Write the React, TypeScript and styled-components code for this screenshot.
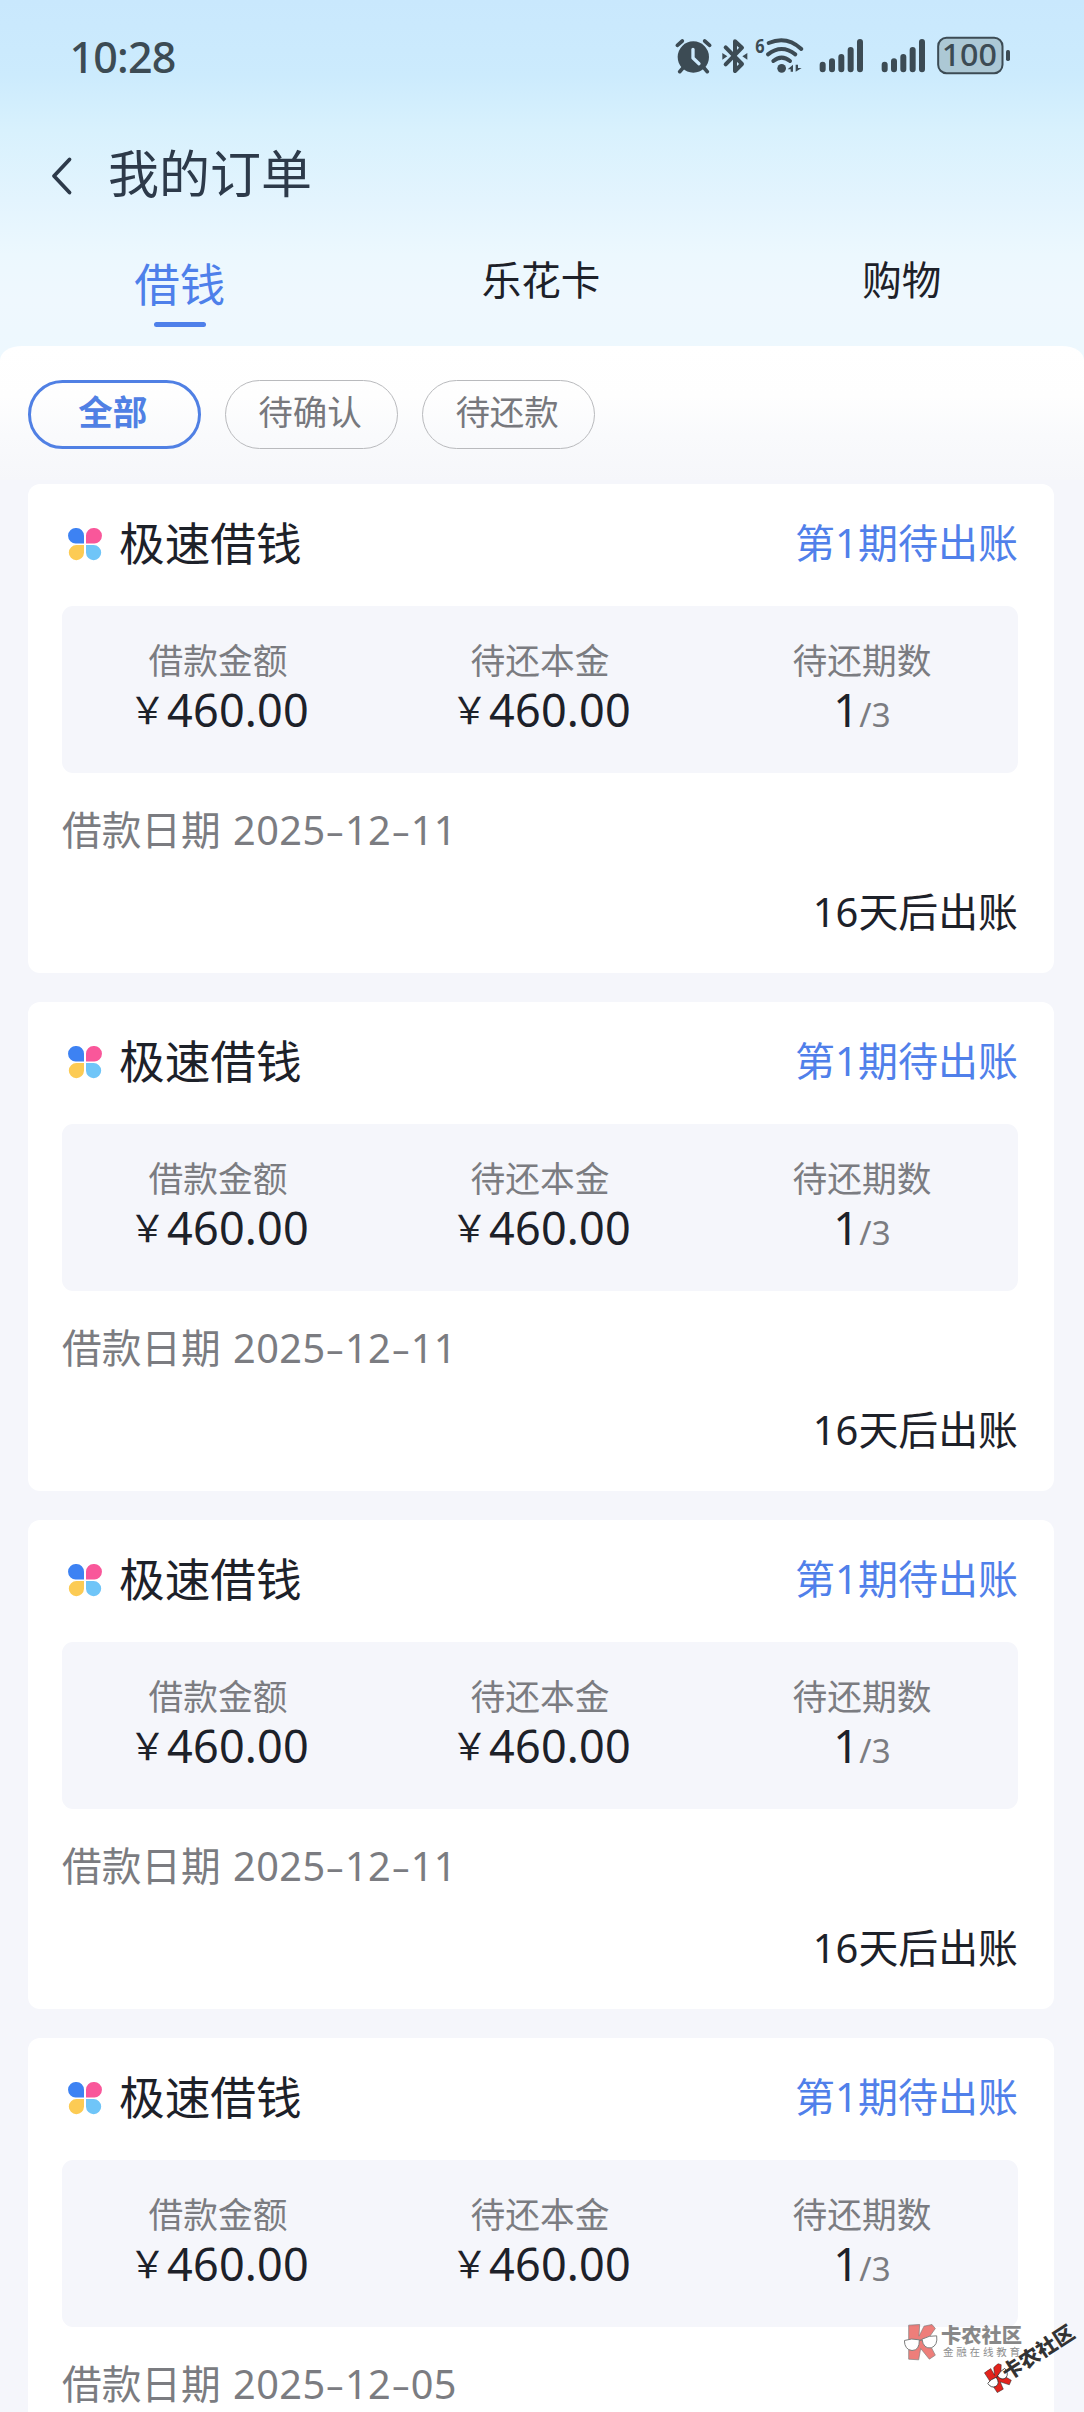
import React from 'react';
import styled, { createGlobalStyle } from 'styled-components';

const Global = createGlobalStyle`
  * { box-sizing: border-box; }
  html, body { margin: 0; padding: 0; background: #f5f6fb; }
  body { font-family: "Noto Sans", "Noto Sans CJK SC", sans-serif; color: #1d2129; }
`;

const Screen = styled.div`
  position: relative;
  width: 1084px;
  height: 2412px;
  overflow: hidden;
  background: #f5f6fb;
`;

const Hero = styled.header`
  height: 365px;
  margin-bottom: -19.5px;
  background: linear-gradient(180deg, #c9e8fd 0, #ccebfd 75px, #d8f1fd 130px, #e3f4fe 200px, #ecf8fe 255px, #eff8fe 300px, #edf8fe 365px);
`;

const StatusBar = styled.div`
  display: flex;
  align-items: center;
  justify-content: space-between;
  height: 114px;
  padding: 0 73.3px 0 69.5px;
  color: #3c4b54;
`;

const Clock = styled.time`
  font-size: 43px;
  font-weight: 500;
  line-height: 60px;
  letter-spacing: -0.8px;
`;

const StatusIcons = styled.div`
  display: flex;
  height: 40px;
  margin-bottom: 4px;
`;

const StatusIcon = styled.svg<{ $w: number; $gap?: number }>`
  width: ${(p) => p.$w / 3}px;
  height: 40px;
  margin-left: ${(p) => (p.$gap ?? 0) / 3}px;
  display: block;
  overflow: visible;
`;

const NavBar = styled.nav`
  display: flex;
  align-items: center;
  height: 118px;
  padding-left: 50px;
  color: #2d3a4a;
`;

const BackIcon = styled.svg`
  width: 24px;
  height: 40px;
  margin: 5px 34px 0 0;
`;

const PageTitle = styled.h1`
  margin: 0;
  font-size: 51px;
  font-weight: 400;
  line-height: 70px;
`;

const Tabs = styled.div`
  display: grid;
  grid-template-columns: repeat(3, 1fr);
  padding: 1px 2px 0 0;
`;

const Tab = styled.div<{ $active?: boolean }>`
  display: flex;
  flex-direction: column;
  align-items: center;
  padding-top: ${(p) => (p.$active ? 18.5 : 19)}px;
  padding-right: ${(p) => (p.$active ? 1 : 0)}px;
  font-size: ${(p) => (p.$active ? 45.5 : 39.5)}px;
  line-height: ${(p) => (p.$active ? 64 : 56)}px;
  color: ${(p) => (p.$active ? '#4e80ea' : '#1d2129')};
`;

const TabMark = styled.span`
  width: 52px;
  height: 5.4px;
  margin-top: 6.2px;
  border-radius: 3px;
  background: #4e80ea;
`;

const Filters = styled.section`
  position: relative;
  display: flex;
  gap: 24.7px;
  height: 134.5px;
  padding: 34.5px 28px 0;
  border-radius: 22px 22px 0 0 / 14px 14px 0 0;
  background: linear-gradient(180deg, #ffffff 0, #fefefe 50px, #f9fafc 90px, #f6f7fa 134px);
`;

const Pill = styled.button<{ $active?: boolean }>`
  width: 172.5px;
  height: 69px;
  padding: 0 3px 5px 0;
  border: ${(p) => (p.$active ? '3px solid #5080e4' : '1px solid #b9babd')};
  border-radius: 35px;
  background: transparent;
  color: ${(p) => (p.$active ? '#5080e4' : '#77787d')};
  font-family: inherit;
  font-size: 34.5px;
  font-weight: ${(p) => (p.$active ? 700 : 400)};
  line-height: 50px;
`;

const List = styled.main`
  display: flex;
  flex-direction: column;
  gap: 29px;
  padding: 3.5px 30px 0 28px;
`;

const Card = styled.article`
  height: 489px;
  padding: 0 36px 0 34px;
  border-radius: 12px;
  background: #fff;
`;

const CardHead = styled.div`
  display: flex;
  align-items: center;
  height: 122.5px;
  padding: 0 0 2px 6px;
`;

const ProductIcon = styled.svg`
  width: 34px;
  height: 34px;
  margin-right: 17px;
`;

const ProductName = styled.h2`
  flex: 1;
  margin: 0 0 2px;
  font-size: 45.7px;
  font-weight: 400;
  line-height: 64px;
`;

const Status = styled.span`
  margin-bottom: 2px;
  font-size: 40px;
  line-height: 56px;
  color: #5080ea;
`;

const Figures = styled.div`
  display: grid;
  grid-template-columns: repeat(3, 1fr);
  gap: 20px;
  height: 166.5px;
  padding: 30px 5px 0;
  border-radius: 11px;
  background: #f5f6fb;
`;

const Figure = styled.div`
  display: flex;
  flex-direction: column;
  align-items: center;
`;

const Label = styled.span`
  font-size: 34.7px;
  line-height: 50px;
  color: #7b7c81;
`;

const Amount = styled.span<{ $money?: boolean }>`
  padding-left: ${(p) => (p.$money ? 8 : 0)}px;
  font-size: 45px;
  line-height: 47px;
  letter-spacing: 0.2px;
  white-space: nowrap;
`;

const Yen = styled.span`
  display: inline-block;
  width: 32px;
  font-family: "Noto Sans CJK SC", sans-serif;
  font-size: 37px;
  line-height: 40px;
  letter-spacing: 0;
  text-indent: -6px;
  transform: translateY(-3px);
`;

const Total = styled.span`
  font-size: 33px;
  color: #7b7c81;
`;

const DateRow = styled.div`
  height: 115px;
  font-size: 39.7px;
  line-height: 115px;
  color: #7b7c81;
  white-space: pre;
`;

const Num = styled.span`
  margin-left: 2px;
  letter-spacing: 0.4px;
`;

const Dash = styled.span`
  display: inline-block;
  width: 19.5px;
  text-align: center;
  letter-spacing: 0;
  transform: scale(1.5, 0.9);
`;

const DueRow = styled.div`
  height: 48px;
  font-size: 39.9px;
  line-height: 47px;
  text-align: right;
`;

const SoftMark = styled.div`
  position: absolute;
  left: 904px;
  top: 2324px;
  display: flex;
  gap: 3px;
  opacity: 0.58;
`;

const SoftLogo = styled.svg`
  width: 34px;
  height: 37px;
`;

const MarkText = styled.div`
  display: flex;
  flex-direction: column;
  white-space: nowrap;
  color: #3a3a3a;
`;

const MarkName = styled.span<{ $size: number }>`
  font-size: ${(p) => p.$size}px;
  font-weight: 900;
  line-height: 23px;
  color: #333;
`;

const MarkSub = styled.span`
  padding-left: 2px;
  font-size: 10.5px;
  line-height: 11px;
  letter-spacing: 2.8px;
`;

const TiltMark = styled.div`
  position: absolute;
  left: 980px;
  top: 2345px;
  display: flex;
  align-items: center;
  transform: rotate(-33deg);
  white-space: nowrap;
`;

const TiltLogo = styled.svg`
  width: 24px;
  height: 25px;
  margin-right: -5px;
`;

const ink = '#3c4b54';

const Bars = () => (
  <g stroke={ink} strokeWidth="18" strokeLinecap="round">
    <path d="M10 134V148M38 124V148M66 111V148M94 90V148M122 66V148" />
  </g>
);

const KLogo = () => (
  <>
    <path d="M14 2 47 0 45 35 60 5 84 0 94 12 70 46 94 92 76 104 50 72 44 106 14 104Z" fill="#e2231c" stroke="#222" strokeWidth="2" />
    <path d="M1 48Q22 40 46 46 47 78 24 78 2 76 1 48Z" fill="#fff" stroke="#222" strokeWidth="3" />
    <path d="M54 44Q76 32 98 34 102 62 82 70 58 74 54 44Z" fill="#fff" stroke="#222" strokeWidth="3" />
    <path d="M46 48 54 46" stroke="#222" strokeWidth="4" />
  </>
);

const orders = [
  { date: '2025-12-11', due: '16天后出账' },
  { date: '2025-12-11', due: '16天后出账' },
  { date: '2025-12-11', due: '16天后出账' },
  { date: '2025-12-05' },
];

const DateText = ({ value }: { value: string }) => (
  <Num>
    {value.split('-').map((part, i) => (
      <React.Fragment key={i}>
        {i > 0 && <Dash>-</Dash>}
        {part}
      </React.Fragment>
    ))}
  </Num>
);

const Money = ({ label }: { label: string }) => (
  <Figure>
    <Label>{label}</Label>
    <Amount $money><Yen>￥</Yen>460.00</Amount>
  </Figure>
);

const OrderCard = ({ date, due }: { date: string; due?: string }) => (
  <Card>
    <CardHead>
      <ProductIcon viewBox="0 0 34 34">
        <path d="M8.500 1A7.600 7.800 0 0 1 16 8.800V16.500H8.500A7.600 7.800 0 1 1 8.500 1Z" fill="#3d82f3" />
        <path d="M25.500 1A7.600 7.800 0 1 1 25.500 16.500H18V8.800A7.600 7.800 0 0 1 25.500 1Z" fill="#f9579a" />
        <path d="M8.500 18H16V25.800A7.600 7.600 0 1 1 8.500 18Z" fill="#fccb54" />
        <path d="M18 18H25.500A7.600 7.600 0 1 1 18 25.800Z" fill="#6fc5f8" />
      </ProductIcon>
      <ProductName>极速借钱</ProductName>
      <Status>第1期待出账</Status>
    </CardHead>
    <Figures>
      <Money label="借款金额" />
      <Money label="待还本金" />
      <Figure>
        <Label>待还期数</Label>
        <Amount>1<Total>/3</Total></Amount>
      </Figure>
    </Figures>
    <DateRow>借款日期 <DateText value={date} /></DateRow>
    {due && <DueRow>{due}</DueRow>}
  </Card>
);

export default function App() {
  return (
    <Screen>
      <Global />
      <Hero>
        <StatusBar>
          <Clock>10:28</Clock>
          <StatusIcons>
            <StatusIcon $w={112} viewBox="44 45 112 120">
              <circle cx="99" cy="111" r="47" fill={ink} />
              <path d="M51 76 66 63M148 76 133 63M67 145 58 155M132 145 141 155" stroke={ink} strokeWidth="11" strokeLinecap="round" />
              <path d="M98 88V114L116 131" fill="none" stroke="#cdeafd" strokeWidth="10" strokeLinecap="round" strokeLinejoin="round" />
            </StatusIcon>
            <StatusIcon $w={76} $gap={30} viewBox="186 45 76 120">
              <path d="M197 82 246 132 225 153V64L246 83 197 133" fill="none" stroke={ink} strokeWidth="12" strokeLinecap="round" strokeLinejoin="round" />
              <path d="M187 99 202 109 187 119ZM262 99 247 109 262 119Z" fill={ink} />
            </StatusIcon>
            <StatusIcon $w={146} $gap={22} viewBox="284 45 146 120">
              <text x="285" y="98" fontSize="61" fontWeight="700" textLength="28" lengthAdjust="spacingAndGlyphs" fill={ink}>6</text>
              <g fill="none" stroke={ink} strokeWidth="12" strokeLinecap="round">
                <path d="M325 69Q379 46 423 87M323 103Q364 71 405 103M339 123Q364 103 389 123" />
              </g>
              <circle cx="364" cy="145" r="13" fill={ink} />
              <path d="M398 134V155H391V148H382ZM406 134V155L424 144H413V134Z" fill={ink} />
            </StatusIcon>
            <StatusIcon $w={134} $gap={48} viewBox="478 45 134 120">
              <g transform="translate(479 0)"><Bars /></g>
            </StatusIcon>
            <StatusIcon $w={134} $gap={52} viewBox="664 45 134 120">
              <g transform="translate(665 0)"><Bars /></g>
            </StatusIcon>
            <StatusIcon $w={222} $gap={32} viewBox="830 45 222 120">
              <rect x="833.500" y="53.500" width="193" height="106" rx="25" fill="#acc8d5" stroke={ink} strokeWidth="6" />
              <rect x="1037" y="90" width="12" height="33" rx="5" fill={ink} />
              <text x="844" y="139" fontSize="92" fontWeight="500" textLength="166" lengthAdjust="spacingAndGlyphs" fill={ink}>100</text>
            </StatusIcon>
          </StatusIcons>
        </StatusBar>
        <NavBar>
          <BackIcon viewBox="0 0 24 40" fill="none" stroke="currentColor" strokeWidth="3.800" strokeLinecap="round" strokeLinejoin="round">
            <path d="M19.500 3.500 4 20 19.500 36.500" />
          </BackIcon>
          <PageTitle>我的订单</PageTitle>
        </NavBar>
        <Tabs>
          <Tab $active>借钱<TabMark /></Tab>
          <Tab>乐花卡</Tab>
          <Tab>购物</Tab>
        </Tabs>
      </Hero>
      <Filters>
        <Pill $active>全部</Pill>
        <Pill>待确认</Pill>
        <Pill>待还款</Pill>
      </Filters>
      <List>
        {orders.map((order, i) => <OrderCard key={i} {...order} />)}
      </List>
      <SoftMark>
        <SoftLogo viewBox="0 0 102 108"><KLogo /></SoftLogo>
        <MarkText>
          <MarkName $size={20.3}>卡农社区</MarkName>
          <MarkSub>金融在线教育</MarkSub>
        </MarkText>
      </SoftMark>
      <TiltMark>
        <TiltLogo viewBox="0 0 102 108"><KLogo /></TiltLogo>
        <MarkName $size={20.3}>卡农社区</MarkName>
      </TiltMark>
    </Screen>
  );
}
